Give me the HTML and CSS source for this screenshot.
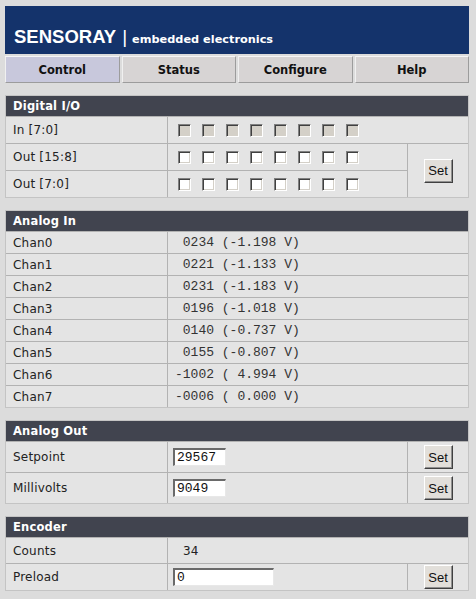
FILE: index.html
```html
<!DOCTYPE html>
<html lang="en">
<head>
    <meta charset="UTF-8">
    <title>Sensoray Control</title>
    <link rel="stylesheet" href="styles.css">
</head>
<body>
    <div class="page">
        <header class="banner">
            <span class="brand">SENSORAY</span>
            <span class="bar">|</span>
            <span class="tagline">embedded electronics</span>
        </header>

        <nav class="tabs">
            <a class="tab active">Control</a>
            <a class="tab">Status</a>
            <a class="tab">Configure</a>
            <a class="tab">Help</a>
        </nav>

        <section class="panel">
            <h2 class="panel-title">Digital I/O</h2>
            <div class="grid dio">
                <div class="cell label">In [7:0]</div>
                <div class="cell boxes wide">
                    <span class="chk off"></span><span class="chk off"></span><span class="chk off"></span><span class="chk off"></span>
                    <span class="chk off"></span><span class="chk off"></span><span class="chk off"></span><span class="chk off"></span>
                </div>
                <div class="cell label">Out [15:8]</div>
                <div class="cell boxes">
                    <span class="chk"></span><span class="chk"></span><span class="chk"></span><span class="chk"></span>
                    <span class="chk"></span><span class="chk"></span><span class="chk"></span><span class="chk"></span>
                </div>
                <div class="cell action span2"><button class="btn">Set</button></div>
                <div class="cell label">Out [7:0]</div>
                <div class="cell boxes">
                    <span class="chk"></span><span class="chk"></span><span class="chk"></span><span class="chk"></span>
                    <span class="chk"></span><span class="chk"></span><span class="chk"></span><span class="chk"></span>
                </div>
            </div>
        </section>

        <section class="panel">
            <h2 class="panel-title">Analog In</h2>
            <div class="grid ain">
                <div class="cell label">Chan0</div><div class="cell mono"> 0234 (-1.198 V)</div>
                <div class="cell label">Chan1</div><div class="cell mono"> 0221 (-1.133 V)</div>
                <div class="cell label">Chan2</div><div class="cell mono"> 0231 (-1.183 V)</div>
                <div class="cell label">Chan3</div><div class="cell mono"> 0196 (-1.018 V)</div>
                <div class="cell label">Chan4</div><div class="cell mono"> 0140 (-0.737 V)</div>
                <div class="cell label">Chan5</div><div class="cell mono"> 0155 (-0.807 V)</div>
                <div class="cell label">Chan6</div><div class="cell mono">-1002 ( 4.994 V)</div>
                <div class="cell label">Chan7</div><div class="cell mono">-0006 ( 0.000 V)</div>
            </div>
        </section>

        <section class="panel">
            <h2 class="panel-title">Analog Out</h2>
            <div class="grid aout">
                <div class="cell label">Setpoint</div>
                <div class="cell field"><input class="num" type="text" value="29567"></div>
                <div class="cell action"><button class="btn">Set</button></div>
                <div class="cell label">Millivolts</div>
                <div class="cell field"><input class="num" type="text" value="9049"></div>
                <div class="cell action"><button class="btn">Set</button></div>
            </div>
        </section>

        <section class="panel">
            <h2 class="panel-title">Encoder</h2>
            <div class="grid enc">
                <div class="cell label">Counts</div>
                <div class="cell value wide">34</div>
                <div class="cell label">Preload</div>
                <div class="cell field"><input class="num long" type="text" value="0"></div>
                <div class="cell action"><button class="btn">Set</button></div>
            </div>
        </section>
    </div>
</body>
</html>
```

FILE: styles.css
```css
body {
    margin: 0;
    background-color: #dcdcdc;
    font-family: "DejaVu Sans", Verdana, sans-serif;
    font-size: 12px;
    color: #222;
}
.page {
    width: 464px;
    margin-left: 5px;
    padding-top: 6px;
}
.banner {
    height: 48px;
    box-sizing: border-box;
    background-color: #14336b;
    color: white;
    padding: 21px 0 0 9px;
    display: flex;
    align-items: baseline;
}
.brand {
    font-family: "Liberation Sans", Arial, sans-serif;
    font-weight: bold;
    font-size: 18.5px;
    line-height: 20px;
}
.bar {
    font-family: "Liberation Sans", Arial, sans-serif;
    font-size: 19px;
    line-height: 20px;
    margin: 0 5px 0 6px;
}
.tagline {
    font-weight: bold;
    font-size: 11.3px;
}
.tabs {
    display: grid;
    grid-template-columns: repeat(4, 1fr);
    gap: 2px;
    margin-top: 2px;
}
.tab {
    height: 27px;
    box-sizing: border-box;
    display: flex;
    align-items: center;
    justify-content: center;
    background-color: #d7d4d4;
    border: 1px solid;
    border-color: #f6f6f6 #9c9c9c #9c9c9c #f0f0f0;
    font-weight: bold;
    font-size: 11.5px;
    color: #111;
}
.tab.active {
    background-color: #c8c8dc;
}
.panel {
    margin-top: 12px;
    border: 1px solid #c4c4c4;
}
.panel-title {
    margin: 0;
    height: 20px;
    line-height: 20px;
    padding-left: 7px;
    background-color: #41444f;
    color: white;
    font-size: 11.5px;
    font-weight: bold;
    letter-spacing: 0.2px;
}
.grid {
    display: grid;
    grid-template-columns: 161px 1fr 60px;
    gap: 1px;
    padding-top: 1px;
    background-color: #b2b2b2;
}
.cell {
    background-color: #e4e4e4;
    display: flex;
    align-items: center;
}
.label {
    padding-left: 7px;
    letter-spacing: 0.2px;
}
.wide {
    grid-column: span 2;
}
.span2 {
    grid-row: span 2;
}
.dio {
    grid-auto-rows: 26px;
}
.ain {
    grid-template-columns: 161px 1fr;
    grid-auto-rows: 21px;
}
.aout {
    grid-auto-rows: 30px;
}
.enc {
    grid-template-rows: 25px 26px;
}
.boxes {
    padding-left: 10px;
    gap: 11px;
}
.chk {
    width: 13px;
    height: 13px;
    box-sizing: border-box;
    background-color: white;
    border-top: 1px solid #808080;
    border-left: 1px solid #808080;
    border-right: 1px solid #ffffff;
    border-bottom: 1px solid #ffffff;
    box-shadow: inset 1px 1px 0 #404040, inset -1px -1px 0 #d4d0c8;
}
.chk.off {
    background-color: #d4d0c8;
}
.mono {
    padding-left: 7px;
    white-space: pre;
    font-family: "Liberation Mono", "Courier New", monospace;
    font-size: 13px;
    color: #333;
}
.value {
    padding-left: 15px;
}
.field {
    padding-left: 5px;
}
.num {
    width: 53px;
    height: 18px;
    box-sizing: border-box;
    margin: 0;
    padding: 0 2px;
    background-color: white;
    border-top: 2px solid #6a6a6a;
    border-left: 2px solid #6a6a6a;
    border-right: 1px solid #e8e8e8;
    border-bottom: 1px solid #e8e8e8;
    font-family: "Liberation Mono", "Courier New", monospace;
    font-size: 13px;
    color: #111;
    outline: none;
}
.num.long {
    width: 101px;
}
.action {
    justify-content: center;
}
.btn {
    width: 29px;
    height: 24px;
    padding: 0;
    background-color: #e2dfda;
    border: 1px solid;
    border-color: #ffffff #404040 #404040 #ffffff;
    box-shadow: inset -1px -1px 0 #909090;
    font-family: "Liberation Sans", Arial, sans-serif;
    font-size: 13px;
    color: #111;
    cursor: pointer;
}
```
